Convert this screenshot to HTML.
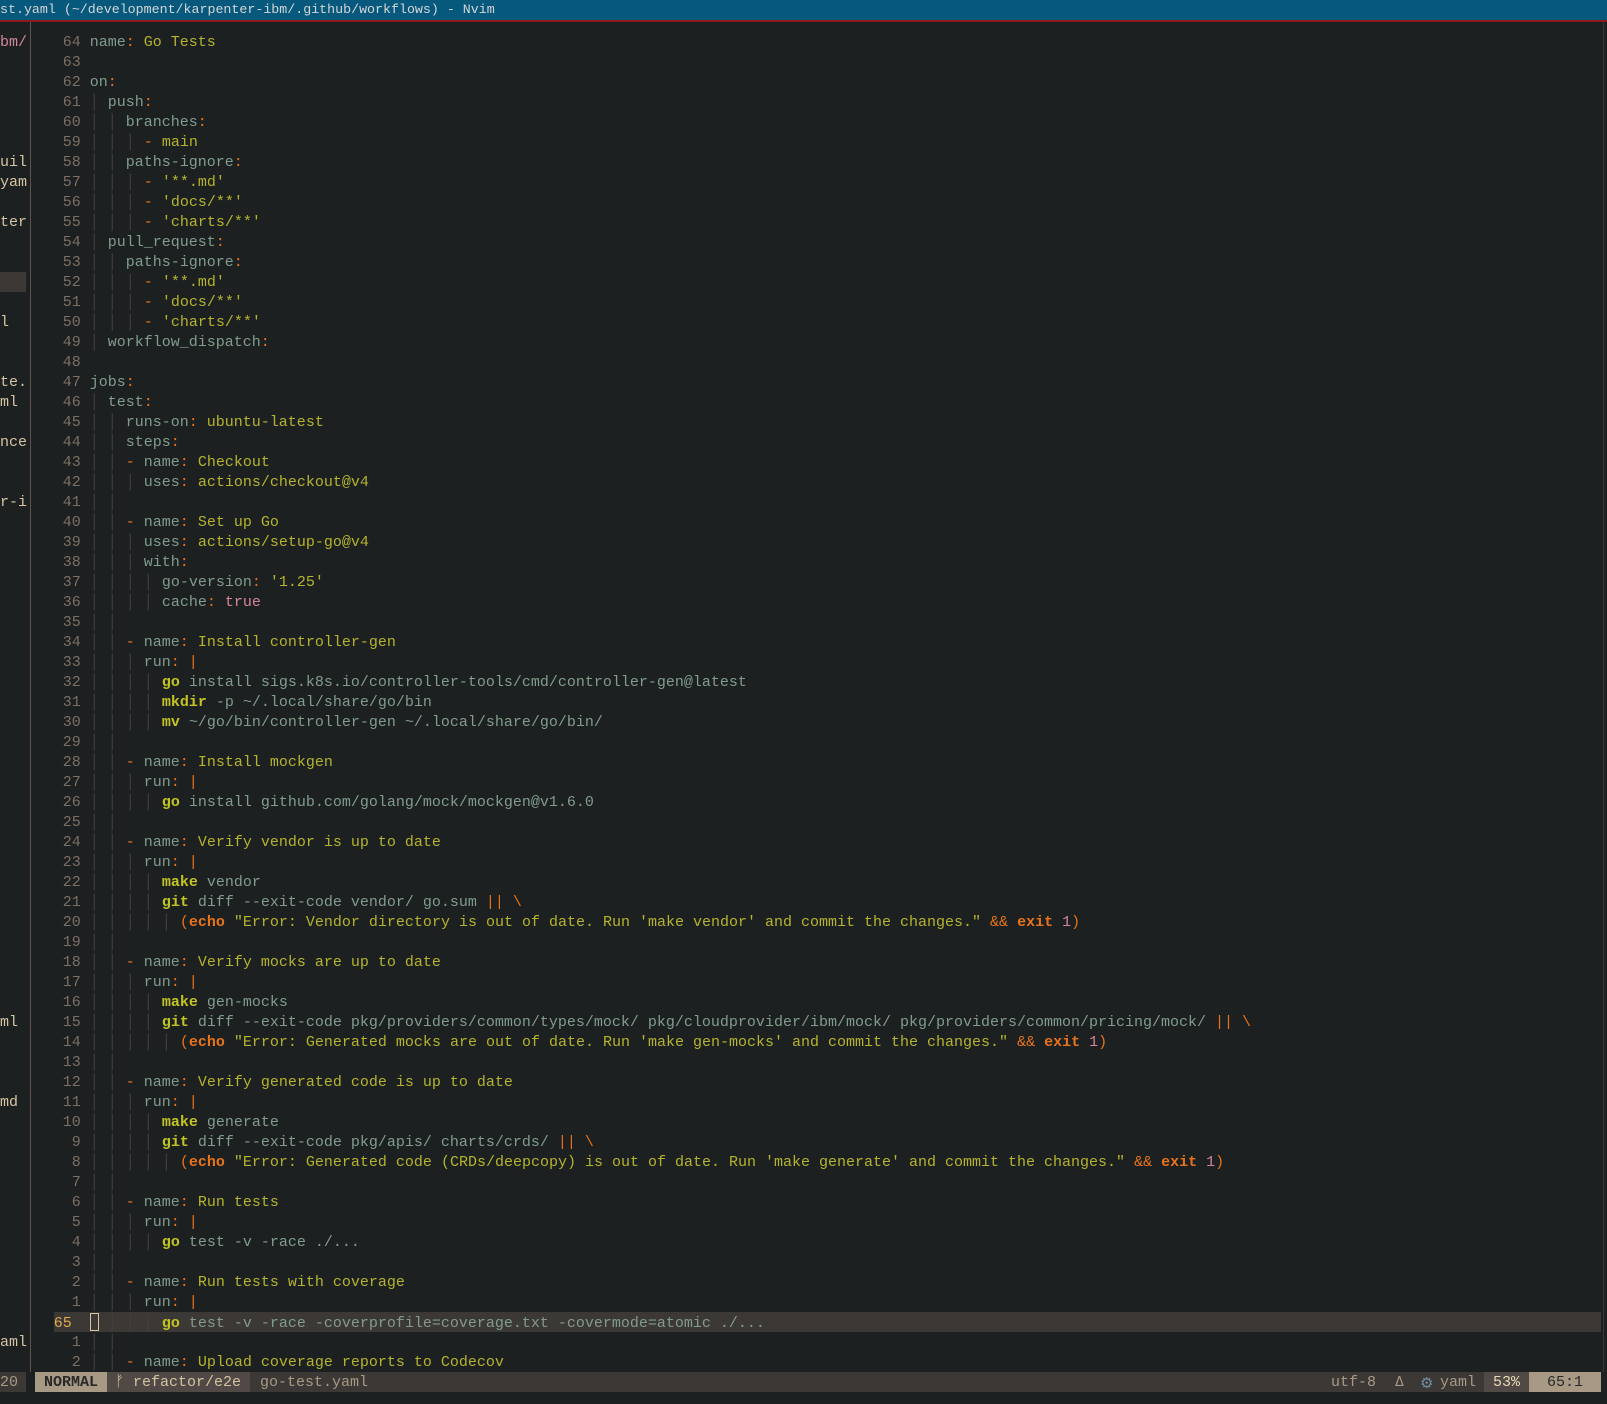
<!DOCTYPE html>
<html><head><meta charset="utf-8"><style>
html,body{margin:0;padding:0;background:#1d2021;width:1607px;height:1404px;overflow:hidden;position:relative}
*{box-sizing:border-box}
.t{position:absolute;left:0;top:0;width:1607px;height:20px;background:#06597d;color:#d5d5d5;font:13.3px/20px "Liberation Mono","DejaVu Sans Mono",monospace;white-space:pre;padding-left:0}
.red{position:absolute;left:0;top:20px;width:1607px;height:2px;background:#8b1a1a}
.vb{position:absolute;left:30px;top:22px;width:1px;height:1350px;background:#5e524a}
.vr{position:absolute;left:1603px;top:22px;width:1px;height:1350px;background:#3a3a3a}
.sb{position:absolute;left:0;width:30px;height:20px;overflow:hidden;font:15px/20px "Liberation Mono",monospace;color:#d5c4a1;white-space:pre;padding-top:1px}
.r{position:absolute;left:53.7px;height:20px;font:15px/20px "Liberation Mono","DejaVu Sans Mono",monospace;white-space:pre;color:#819c8d;padding-top:1px}
.cl{background:#3c3836;width:1547px}
.n{color:#7c6f64}
.cn{color:#e3a84a}
i{font-style:normal;color:#45403b}
.s{color:#b5b42c}
.o{color:#e8731b}
.ob{color:#e8731b;font-weight:bold}
.b{color:#c3c321;font-weight:bold}
.p{color:#d3869b}
.cur{display:inline-block;width:9px;height:18px;vertical-align:-4px;border:1px solid #d5c4a1}
.st{position:absolute;top:1372px;height:20px;font:15px/20px "Liberation Mono","DejaVu Sans Mono",monospace;white-space:pre;padding-top:1px}
</style></head><body>
<div class="t">st.yaml (~/development/karpenter-ibm/.github/workflows) - Nvim</div>
<div class="red"></div>
<div class="vb"></div>
<div class="vr"></div>
<div class="sb" style="top:32px;color:#d3869b">bm/</div>
<div class="sb" style="top:152px">uil</div>
<div class="sb" style="top:172px">yam</div>
<div class="sb" style="top:212px">ter</div>
<div class="sb" style="top:272px;width:26px;background:#3c3836"></div>
<div class="sb" style="top:312px">l</div>
<div class="sb" style="top:372px">te.</div>
<div class="sb" style="top:392px">ml</div>
<div class="sb" style="top:432px">nce</div>
<div class="sb" style="top:492px">r-i</div>
<div class="sb" style="top:1012px">ml</div>
<div class="sb" style="top:1092px">md</div>
<div class="sb" style="top:1332px">aml</div>

<div class="r" style="top:32px"><span class="n"> 64 </span>name<span class="o">:</span> <span class="s">Go Tests</span></div>
<div class="r" style="top:52px"><span class="n"> 63 </span></div>
<div class="r" style="top:72px"><span class="n"> 62 </span>on<span class="o">:</span></div>
<div class="r" style="top:92px"><span class="n"> 61 </span><i>│</i> push<span class="o">:</span></div>
<div class="r" style="top:112px"><span class="n"> 60 </span><i>│</i> <i>│</i> branches<span class="o">:</span></div>
<div class="r" style="top:132px"><span class="n"> 59 </span><i>│</i> <i>│</i> <i>│</i> <span class="o">-</span> <span class="s">main</span></div>
<div class="r" style="top:152px"><span class="n"> 58 </span><i>│</i> <i>│</i> paths-ignore<span class="o">:</span></div>
<div class="r" style="top:172px"><span class="n"> 57 </span><i>│</i> <i>│</i> <i>│</i> <span class="o">-</span> <span class="s">'**.md'</span></div>
<div class="r" style="top:192px"><span class="n"> 56 </span><i>│</i> <i>│</i> <i>│</i> <span class="o">-</span> <span class="s">'docs/**'</span></div>
<div class="r" style="top:212px"><span class="n"> 55 </span><i>│</i> <i>│</i> <i>│</i> <span class="o">-</span> <span class="s">'charts/**'</span></div>
<div class="r" style="top:232px"><span class="n"> 54 </span><i>│</i> pull_request<span class="o">:</span></div>
<div class="r" style="top:252px"><span class="n"> 53 </span><i>│</i> <i>│</i> paths-ignore<span class="o">:</span></div>
<div class="r" style="top:272px"><span class="n"> 52 </span><i>│</i> <i>│</i> <i>│</i> <span class="o">-</span> <span class="s">'**.md'</span></div>
<div class="r" style="top:292px"><span class="n"> 51 </span><i>│</i> <i>│</i> <i>│</i> <span class="o">-</span> <span class="s">'docs/**'</span></div>
<div class="r" style="top:312px"><span class="n"> 50 </span><i>│</i> <i>│</i> <i>│</i> <span class="o">-</span> <span class="s">'charts/**'</span></div>
<div class="r" style="top:332px"><span class="n"> 49 </span><i>│</i> workflow_dispatch<span class="o">:</span></div>
<div class="r" style="top:352px"><span class="n"> 48 </span></div>
<div class="r" style="top:372px"><span class="n"> 47 </span>jobs<span class="o">:</span></div>
<div class="r" style="top:392px"><span class="n"> 46 </span><i>│</i> test<span class="o">:</span></div>
<div class="r" style="top:412px"><span class="n"> 45 </span><i>│</i> <i>│</i> runs-on<span class="o">:</span> <span class="s">ubuntu-latest</span></div>
<div class="r" style="top:432px"><span class="n"> 44 </span><i>│</i> <i>│</i> steps<span class="o">:</span></div>
<div class="r" style="top:452px"><span class="n"> 43 </span><i>│</i> <i>│</i> <span class="o">-</span> name<span class="o">:</span> <span class="s">Checkout</span></div>
<div class="r" style="top:472px"><span class="n"> 42 </span><i>│</i> <i>│</i> <i>│</i> uses<span class="o">:</span> <span class="s">actions/checkout@v4</span></div>
<div class="r" style="top:492px"><span class="n"> 41 </span><i>│</i> <i>│</i></div>
<div class="r" style="top:512px"><span class="n"> 40 </span><i>│</i> <i>│</i> <span class="o">-</span> name<span class="o">:</span> <span class="s">Set up Go</span></div>
<div class="r" style="top:532px"><span class="n"> 39 </span><i>│</i> <i>│</i> <i>│</i> uses<span class="o">:</span> <span class="s">actions/setup-go@v4</span></div>
<div class="r" style="top:552px"><span class="n"> 38 </span><i>│</i> <i>│</i> <i>│</i> with<span class="o">:</span></div>
<div class="r" style="top:572px"><span class="n"> 37 </span><i>│</i> <i>│</i> <i>│</i> <i>│</i> go-version<span class="o">:</span> <span class="s">'1.25'</span></div>
<div class="r" style="top:592px"><span class="n"> 36 </span><i>│</i> <i>│</i> <i>│</i> <i>│</i> cache<span class="o">:</span> <span class="p">true</span></div>
<div class="r" style="top:612px"><span class="n"> 35 </span><i>│</i> <i>│</i></div>
<div class="r" style="top:632px"><span class="n"> 34 </span><i>│</i> <i>│</i> <span class="o">-</span> name<span class="o">:</span> <span class="s">Install controller-gen</span></div>
<div class="r" style="top:652px"><span class="n"> 33 </span><i>│</i> <i>│</i> <i>│</i> run<span class="o">: |</span></div>
<div class="r" style="top:672px"><span class="n"> 32 </span><i>│</i> <i>│</i> <i>│</i> <i>│</i> <span class="b">go</span> install sigs.k8s.io/controller-tools/cmd/controller-gen@latest</div>
<div class="r" style="top:692px"><span class="n"> 31 </span><i>│</i> <i>│</i> <i>│</i> <i>│</i> <span class="b">mkdir</span> -p ~/.local/share/go/bin</div>
<div class="r" style="top:712px"><span class="n"> 30 </span><i>│</i> <i>│</i> <i>│</i> <i>│</i> <span class="b">mv</span> ~/go/bin/controller-gen ~/.local/share/go/bin/</div>
<div class="r" style="top:732px"><span class="n"> 29 </span><i>│</i> <i>│</i></div>
<div class="r" style="top:752px"><span class="n"> 28 </span><i>│</i> <i>│</i> <span class="o">-</span> name<span class="o">:</span> <span class="s">Install mockgen</span></div>
<div class="r" style="top:772px"><span class="n"> 27 </span><i>│</i> <i>│</i> <i>│</i> run<span class="o">: |</span></div>
<div class="r" style="top:792px"><span class="n"> 26 </span><i>│</i> <i>│</i> <i>│</i> <i>│</i> <span class="b">go</span> install github.com/golang/mock/mockgen@v1.6.0</div>
<div class="r" style="top:812px"><span class="n"> 25 </span><i>│</i> <i>│</i></div>
<div class="r" style="top:832px"><span class="n"> 24 </span><i>│</i> <i>│</i> <span class="o">-</span> name<span class="o">:</span> <span class="s">Verify vendor is up to date</span></div>
<div class="r" style="top:852px"><span class="n"> 23 </span><i>│</i> <i>│</i> <i>│</i> run<span class="o">: |</span></div>
<div class="r" style="top:872px"><span class="n"> 22 </span><i>│</i> <i>│</i> <i>│</i> <i>│</i> <span class="b">make</span> vendor</div>
<div class="r" style="top:892px"><span class="n"> 21 </span><i>│</i> <i>│</i> <i>│</i> <i>│</i> <span class="b">git</span> diff --exit-code vendor/ go.sum <span class="o">|| \</span></div>
<div class="r" style="top:912px"><span class="n"> 20 </span><i>│</i> <i>│</i> <i>│</i> <i>│</i> <i>│</i> <span class="o">(</span><span class="ob">echo</span> <span class="s">"Error: Vendor directory is out of date. Run 'make vendor' and commit the changes."</span> <span class="o">&amp;&amp;</span> <span class="ob">exit</span> <span class="p">1</span><span class="o">)</span></div>
<div class="r" style="top:932px"><span class="n"> 19 </span><i>│</i> <i>│</i></div>
<div class="r" style="top:952px"><span class="n"> 18 </span><i>│</i> <i>│</i> <span class="o">-</span> name<span class="o">:</span> <span class="s">Verify mocks are up to date</span></div>
<div class="r" style="top:972px"><span class="n"> 17 </span><i>│</i> <i>│</i> <i>│</i> run<span class="o">: |</span></div>
<div class="r" style="top:992px"><span class="n"> 16 </span><i>│</i> <i>│</i> <i>│</i> <i>│</i> <span class="b">make</span> gen-mocks</div>
<div class="r" style="top:1012px"><span class="n"> 15 </span><i>│</i> <i>│</i> <i>│</i> <i>│</i> <span class="b">git</span> diff --exit-code pkg/providers/common/types/mock/ pkg/cloudprovider/ibm/mock/ pkg/providers/common/pricing/mock/ <span class="o">|| \</span></div>
<div class="r" style="top:1032px"><span class="n"> 14 </span><i>│</i> <i>│</i> <i>│</i> <i>│</i> <i>│</i> <span class="o">(</span><span class="ob">echo</span> <span class="s">"Error: Generated mocks are out of date. Run 'make gen-mocks' and commit the changes."</span> <span class="o">&amp;&amp;</span> <span class="ob">exit</span> <span class="p">1</span><span class="o">)</span></div>
<div class="r" style="top:1052px"><span class="n"> 13 </span><i>│</i> <i>│</i></div>
<div class="r" style="top:1072px"><span class="n"> 12 </span><i>│</i> <i>│</i> <span class="o">-</span> name<span class="o">:</span> <span class="s">Verify generated code is up to date</span></div>
<div class="r" style="top:1092px"><span class="n"> 11 </span><i>│</i> <i>│</i> <i>│</i> run<span class="o">: |</span></div>
<div class="r" style="top:1112px"><span class="n"> 10 </span><i>│</i> <i>│</i> <i>│</i> <i>│</i> <span class="b">make</span> generate</div>
<div class="r" style="top:1132px"><span class="n">  9 </span><i>│</i> <i>│</i> <i>│</i> <i>│</i> <span class="b">git</span> diff --exit-code pkg/apis/ charts/crds/ <span class="o">|| \</span></div>
<div class="r" style="top:1152px"><span class="n">  8 </span><i>│</i> <i>│</i> <i>│</i> <i>│</i> <i>│</i> <span class="o">(</span><span class="ob">echo</span> <span class="s">"Error: Generated code (CRDs/deepcopy) is out of date. Run 'make generate' and commit the changes."</span> <span class="o">&amp;&amp;</span> <span class="ob">exit</span> <span class="p">1</span><span class="o">)</span></div>
<div class="r" style="top:1172px"><span class="n">  7 </span><i>│</i> <i>│</i></div>
<div class="r" style="top:1192px"><span class="n">  6 </span><i>│</i> <i>│</i> <span class="o">-</span> name<span class="o">:</span> <span class="s">Run tests</span></div>
<div class="r" style="top:1212px"><span class="n">  5 </span><i>│</i> <i>│</i> <i>│</i> run<span class="o">: |</span></div>
<div class="r" style="top:1232px"><span class="n">  4 </span><i>│</i> <i>│</i> <i>│</i> <i>│</i> <span class="b">go</span> test -v -race ./...</div>
<div class="r" style="top:1252px"><span class="n">  3 </span><i>│</i> <i>│</i></div>
<div class="r" style="top:1272px"><span class="n">  2 </span><i>│</i> <i>│</i> <span class="o">-</span> name<span class="o">:</span> <span class="s">Run tests with coverage</span></div>
<div class="r" style="top:1292px"><span class="n">  1 </span><i>│</i> <i>│</i> <i>│</i> run<span class="o">: |</span></div>
<div class="r cl" style="top:1312px"><span class="cn">65  </span><span class="cur"></span> <i>│</i> <i>│</i> <i>│</i> <span class="b">go</span> test -v -race -coverprofile=coverage.txt -covermode=atomic ./...</div>
<div class="r" style="top:1332px"><span class="n">  1 </span><i>│</i> <i>│</i></div>
<div class="r" style="top:1352px"><span class="n">  2 </span><i>│</i> <i>│</i> <span class="o">-</span> name<span class="o">:</span> <span class="s">Upload coverage reports to Codecov</span></div>

<div class="st" style="left:0;width:26px;background:#3c3836;color:#a89984">20</div>
<div class="st" style="left:35px;width:1566px;background:#3c3836"></div>
<div class="st" style="left:35px;width:72px;background:#a89984;color:#282828;font-weight:bold;padding-left:9px">NORMAL</div>
<div class="st" style="left:107px;width:143px;background:#504945;color:#d5c4a1;padding-left:8px">ᚠ refactor/e2e</div>
<div class="st" style="left:260px;color:#a89984">go-test.yaml</div>
<div class="st" style="left:1331px;color:#a89984">utf-8</div>
<div class="st" style="left:1395px;color:#a89984;font-family:'DejaVu Sans',sans-serif;font-size:13px">Δ</div>
<div class="st" style="left:1420px;color:#6f8fa3;font-family:'DejaVu Sans',sans-serif;font-size:15px">⚙</div>
<div class="st" style="left:1440px;color:#a89984">yaml</div>
<div class="st" style="left:1484px;width:45px;background:#504945;color:#ebdbb2;padding-left:9px">53%</div>
<div class="st" style="left:1529px;width:72px;background:#a89984;color:#282828;padding-left:18px">65:1</div>
</body></html>
